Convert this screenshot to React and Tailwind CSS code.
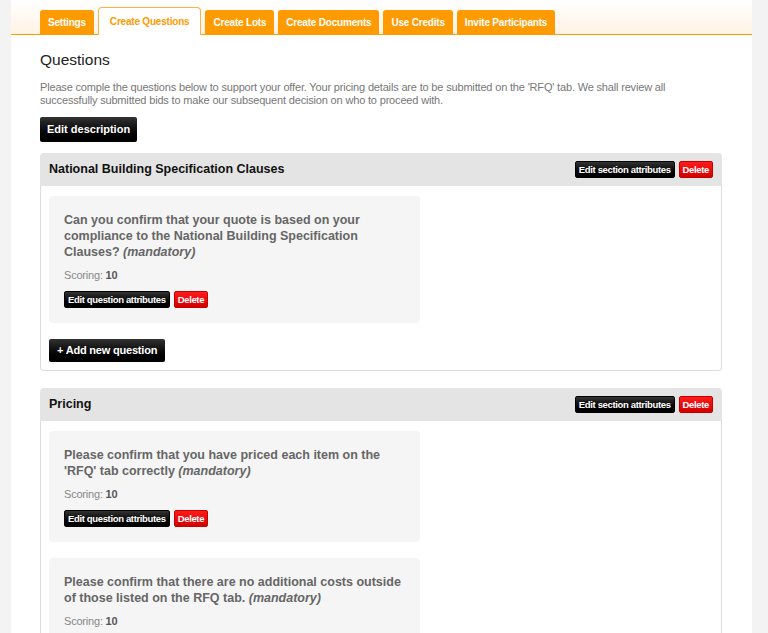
import React from 'react';

const tabs = ['Settings', 'Create Questions', 'Create Lots', 'Create Documents', 'Use Credits', 'Invite Participants'];

const sections = [
    {
        title: 'National Building Specification Clauses',
        questions: [
            'Can you confirm that your quote is based on your compliance to the National Building Specification Clauses?',
        ],
        addButton: true,
    },
    {
        title: 'Pricing',
        questions: [
            "Please confirm that you have priced each item on the 'RFQ' tab correctly",
            'Please confirm that there are no additional costs outside of those listed on the RFQ tab.',
        ],
    },
];

function SmallButton({ red, children }) {
    return (
        <button
            className={`h-[17px] px-[3px] rounded-[2px] text-[9.5px] leading-none font-bold tracking-[-0.35px] text-white border ${
                red
                    ? 'bg-gradient-to-b from-[#ff1a1a] to-[#d10000] border-[#c80000]'
                    : 'bg-gradient-to-b from-[#333333] to-[#000000] border-[#000000]'
            }`}>
            {children}
        </button>
    );
}

function QuestionCard({ text }) {
    return (
        <div className="w-[371px] bg-[#f5f5f5] rounded-[4px] px-[15px] pt-[16px] pb-[15px]">
            <p className="text-[12.5px] leading-[16px] font-bold text-[#666666]">
                {text} <i>(mandatory)</i>
            </p>
            <p className="mt-[8px] text-[11px] leading-[14px] tracking-[-0.2px] text-[#888888]">
                Scoring: <b className="text-[#555555]">10</b>
            </p>
            <div className="mt-[9px] flex gap-[4px]">
                <SmallButton>Edit question attributes</SmallButton>
                <SmallButton red>Delete</SmallButton>
            </div>
        </div>
    );
}

function Section({ title, questions, addButton }) {
    return (
        <div className="mt-[11px] mb-[17px]">
            <div className="h-[33px] bg-[#e4e4e4] rounded-t-[4px] flex items-center justify-between pl-[9px] pr-[9px]">
                <h2 className="text-[12.5px] font-bold text-[#111111]">{title}</h2>
                <div className="flex gap-[4px]">
                    <SmallButton>Edit section attributes</SmallButton>
                    <SmallButton red>Delete</SmallButton>
                </div>
            </div>
            <div className="border border-t-0 border-[#dddddd] rounded-b-[4px] px-[8px] pt-[10px] pb-[8px] flex flex-col gap-[16px]">
                {questions.map((q, i) => (
                    <QuestionCard key={i} text={q} />
                ))}
                {addButton && (
                    <div className="flex">
                        <button className="h-[23px] px-[8px] rounded-[2px] bg-gradient-to-b from-[#333333] to-[#000000] text-white text-[11px] font-bold tracking-[-0.2px]">
                            + Add new question
                        </button>
                    </div>
                )}
            </div>
        </div>
    );
}

export default function App() {
    return (
        <div className="min-h-[633px] bg-[#f3f3f3] font-['Liberation_Sans',Arial,sans-serif] flex">
            <div className="ml-[11px] w-[741px] bg-white min-h-[633px]">
                {/* Tabs */}
                <div className="h-[35px] flex items-end gap-[4px] pl-[29px] border-b border-[#ff9a00] bg-gradient-to-b from-white to-[#fff3e4]">
                    {tabs.map((t) =>
                        t === 'Create Questions' ? (
                            <div key={t}
                                className="h-[28px] -mb-px px-[11px] flex items-center bg-white border border-b-0 border-[#ffb04a] rounded-t-[4px] text-[10px] font-bold tracking-[-0.2px] text-[#ff9a00]">
                                {t}
                            </div>
                        ) : (
                            <div key={t}
                                className="h-[24px] px-[8px] flex items-center bg-[#ff9a00] rounded-t-[3px] text-[10px] font-bold tracking-[-0.2px] text-white">
                                {t}
                            </div>
                        )
                    )}
                </div>

                <div className="pl-[29px] pr-[30px]">
                    <h1 className="mt-[16px] text-[15.5px] leading-[18px] text-[#222222]">Questions</h1>
                    <p className="mt-[12px] max-w-[640px] text-[11px] leading-[13px] text-[#777777] tracking-[-0.17px]">
                        Please comple the questions below to support your offer. Your pricing details are to be submitted on the 'RFQ' tab. We shall review all successfully submitted bids to make our subsequent decision on who to proceed with.
                    </p>
                    <button className="mt-[10px] h-[25px] px-[7px] rounded-[2px] bg-gradient-to-b from-[#333333] to-[#000000] text-white text-[11px] font-bold">
                        Edit description
                    </button>

                    {sections.map((s) => (
                        <Section key={s.title} {...s} />
                    ))}
                </div>
            </div>
        </div>
    );
}
